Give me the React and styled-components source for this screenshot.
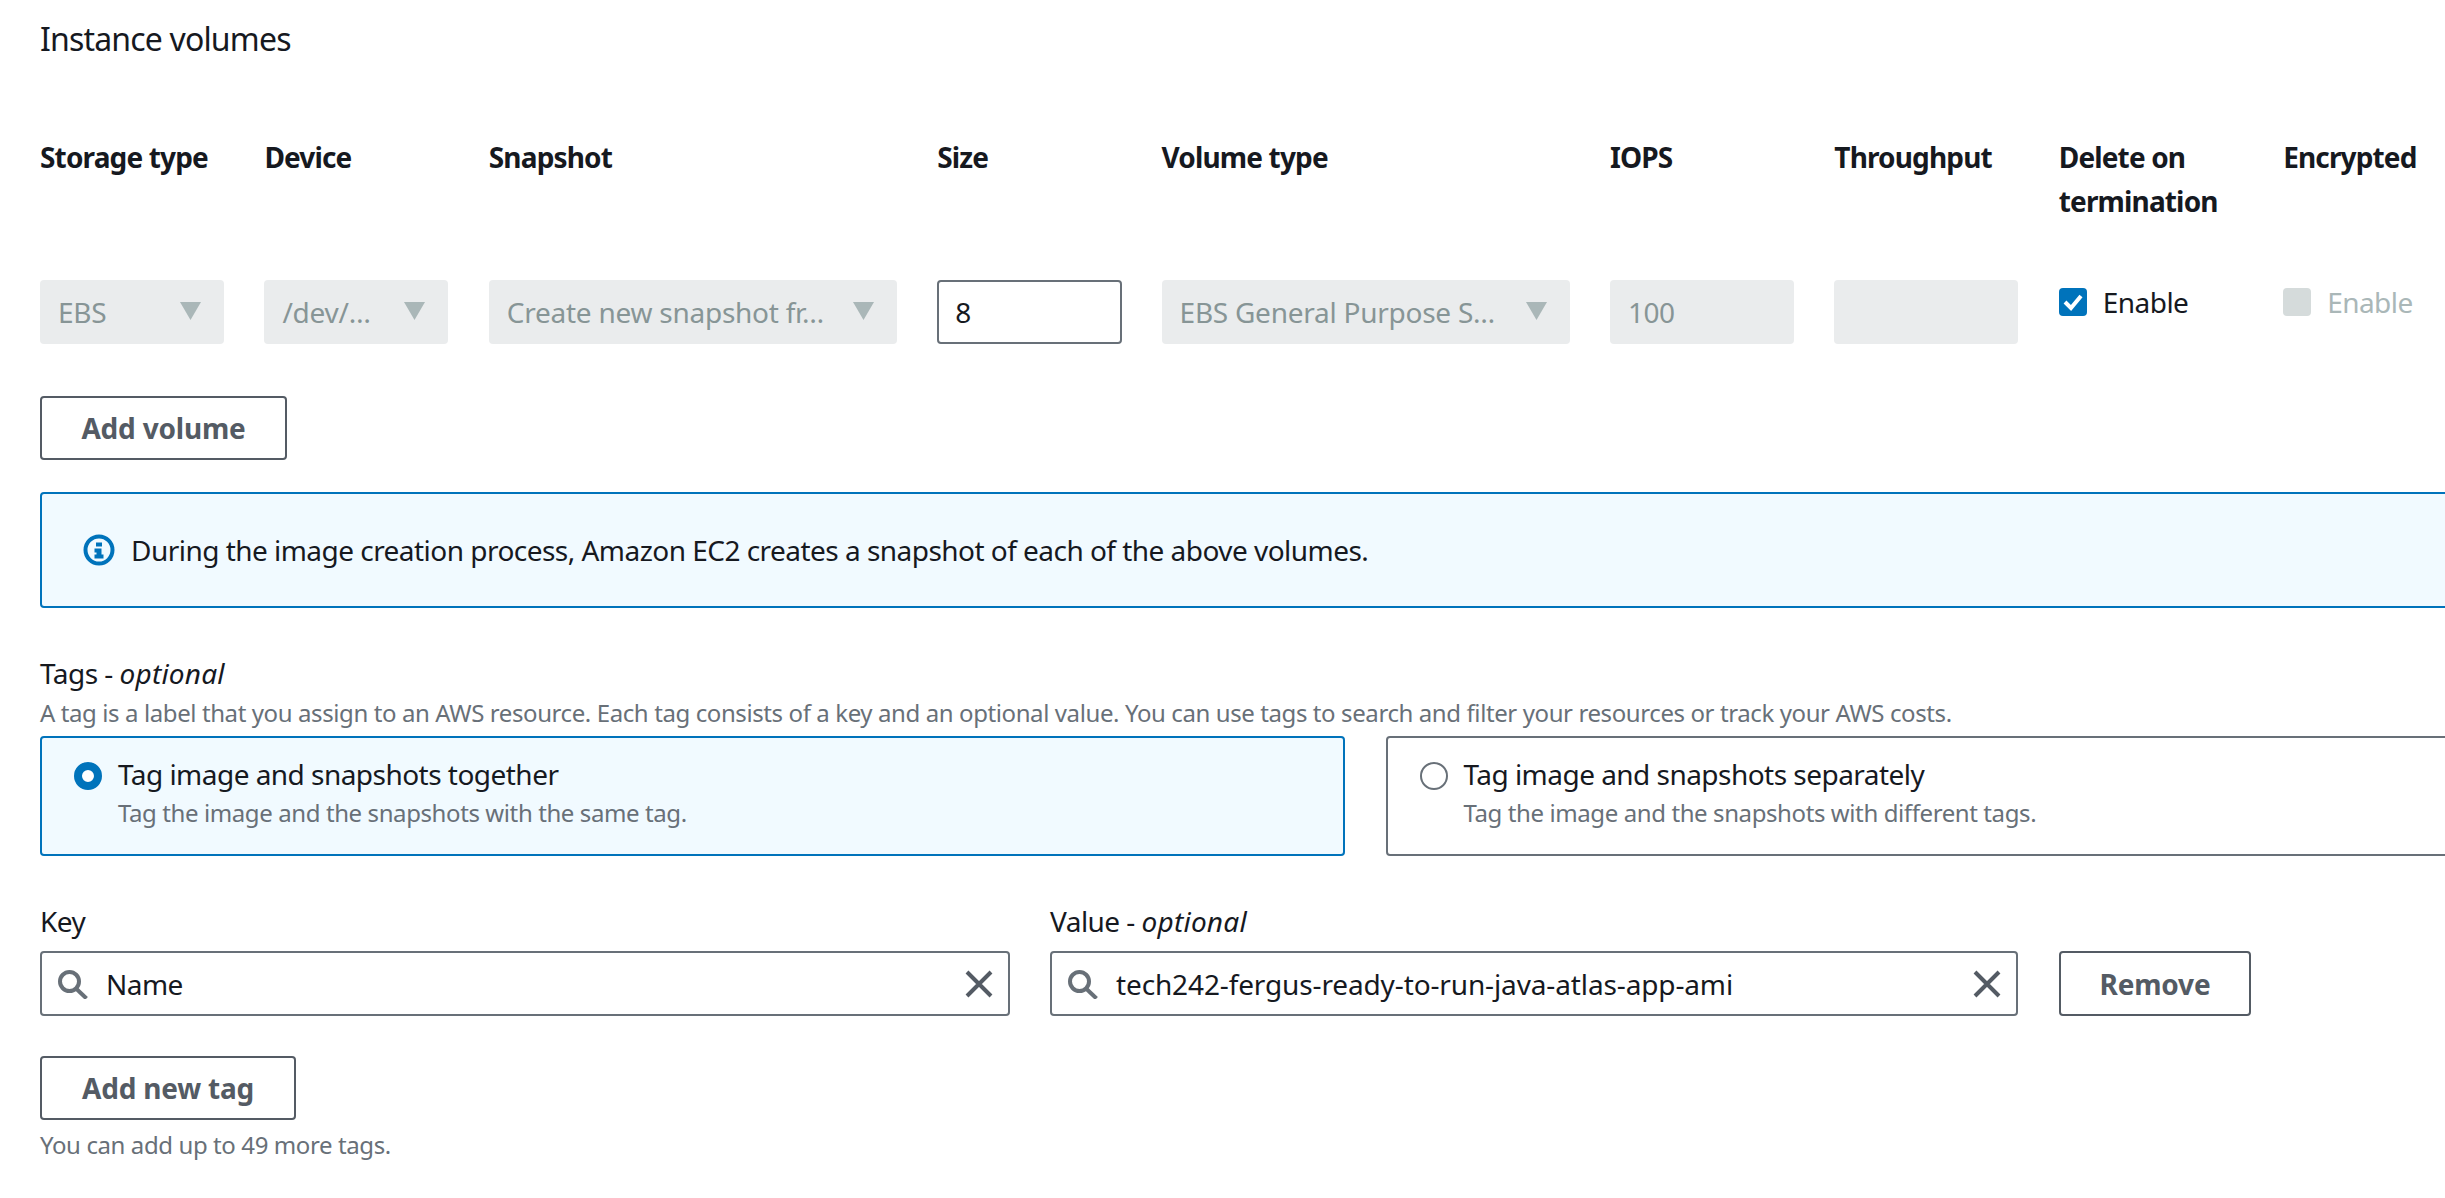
import React from "react";
import styled, { createGlobalStyle } from "styled-components";

const GlobalStyle = createGlobalStyle`
  html, body {
    margin: 0;
    padding: 0;
    background: #fff;
    overflow: hidden;
  }
  * {
    box-sizing: border-box;
  }
`;

const Page = styled.div`
  width: 2445px;
  height: 1198px;
  overflow: hidden;
  padding: 17px 0 0 40px;
  font-family: "Noto Sans", "Open Sans", sans-serif;
  font-size: 28px;
  line-height: 44px;
  color: #16191f;
  letter-spacing: -0.53px;
`;

const Title = styled.div`
  height: 44px;
  margin-bottom: 74px;
  font-size: 32px;
  letter-spacing: -0.83px;
`;

const VolumeGrid = styled.div`
  display: grid;
  width: 2600px;
  grid-template-columns: 184px 184px 408px 184px 408px 184px 184px 184px 184px;
  column-gap: 40.4px;
  row-gap: 57px;
  margin-bottom: 52px;
`;

const HeadCell = styled.div`
  font-weight: 700;
  min-height: 88px;
  letter-spacing: -0.85px;
`;

const SelectBox = styled.div`
  display: flex;
  align-items: center;
  justify-content: space-between;
  height: 64px;
  padding: 0 23px 0 18px;
  background: #eaeced;
  border-radius: 4px;
  color: #879596;
  letter-spacing: -0.25px;
`;

const Caret = styled.svg`
  flex: none;
  width: 21px;
  height: 18px;
  margin-top: -2px;
  fill: #aab7b8;
`;

const TextBox = styled.div`
  height: 64px;
  padding: ${p => (p.$disabled ? "10px 18px" : "8px 16px")};
  margin-right: ${p => (p.$disabled ? "0" : "-1px")};
  background: ${p => (p.$disabled ? "#eaeced" : "#fff")};
  color: ${p => (p.$disabled ? "#879596" : "#16191f")};
  border: ${p => (p.$disabled ? "none" : "2px solid #687078")};
  border-radius: 4px;
`;

const CheckRow = styled.div`
  display: flex;
  align-items: center;
  gap: 16px;
  height: 44px;
  color: ${p => (p.$disabled ? "#aab7b8" : "#16191f")};
`;

const CheckMark = styled.span`
  display: flex;
  align-items: center;
  justify-content: center;
  width: 28px;
  height: 28px;
  border-radius: 4px;
  background: ${p => (p.$disabled ? "#d5dbdb" : "#0073bb")};
`;

const Button = styled.div`
  display: inline-flex;
  align-items: center;
  justify-content: center;
  width: ${p => p.$width}px;
  height: ${p => p.$height || 64}px;
  border: 2px solid #545b64;
  border-radius: 4px;
  background: #fff;
  color: #545b64;
  font-weight: 700;
  letter-spacing: -0.2px;
`;

const ButtonRow = styled.div`
  height: 64px;
  margin-bottom: 32px;
`;

const Alert = styled.div`
  display: flex;
  align-items: center;
  gap: 16px;
  width: 2600px;
  height: 116px;
  padding: 0 41px;
  background: #f1faff;
  border: 2px solid #0073bb;
  border-radius: 4px;
  margin-bottom: 45px;
`;

const TagsLabel = styled.div`
  line-height: 40px;
  margin-bottom: 2px;
`;

const Optional = styled.i`
  font-style: italic;
  letter-spacing: 0.2px;
`;

const Description = styled.div`
  font-size: 24px;
  line-height: 36px;
  color: #687078;
  letter-spacing: -0.4px;
  margin-bottom: ${p => p.$gap || 0}px;
`;

const Tiles = styled.div`
  display: grid;
  grid-template-columns: 1305px 1305px;
  column-gap: 40.5px;
  margin-bottom: 45px;
`;

const Tile = styled.div`
  display: flex;
  gap: 16px;
  height: 120px;
  padding: 15px 32px 0;
  background: ${p => (p.$active ? "#f1faff" : "#fff")};
  border: 2px solid ${p => (p.$active ? "#0073bb" : "#687078")};
  border-radius: 4px;
`;

const Radio = styled.span`
  flex: none;
  width: 28px;
  height: 28px;
  margin-top: 9px;
  border-radius: 50%;
  background: #fff;
  border: ${p => (p.$active ? "8px solid #0073bb" : "2px solid #687078")};
`;

const TileTitle = styled.div`
  line-height: 42px;
`;

const TagRow = styled.div`
  display: flex;
  margin-bottom: 40px;
`;

const TagField = styled.div`
  width: ${p => p.$width}px;
  margin-right: ${p => p.$gap}px;
`;

const FieldLabel = styled.div`
  height: 44px;
  line-height: 41px;
  margin-bottom: 6px;
`;

const SearchBox = styled.div`
  display: flex;
  align-items: center;
  height: 65px;
  padding: 0 16px;
  border: 2px solid #687078;
  border-radius: 4px;
  background: #fff;
`;

const SearchValue = styled.span`
  flex: 1;
  margin-left: 18px;
  white-space: nowrap;
  letter-spacing: ${p => (p.$loose ? "-0.13px" : "inherit")};
`;

const RemoveSlot = styled.div`
  padding-top: 50px;
`;

const Note = styled(Description)`
  margin-top: 7px;
`;

const IconSvg = styled.svg`
  flex: none;
  width: 30px;
  height: 30px;
  fill: none;
  stroke: #687078;
  stroke-width: 4;
`;

const ClearSvg = styled(IconSvg)`
  margin-right: -2px;
  stroke: #545b64;
`;

const InfoSvg = styled.svg`
  flex: none;
  width: 32px;
  height: 32px;
`;

const DownCaret = () => (
  <Caret viewBox="0 0 21 18">
    <path d="M0 0h21L10.5 18z" />
  </Caret>
);

const SearchIcon = () => (
  <IconSvg viewBox="0 0 30 30">
    <circle cx="11.5" cy="12.5" r="9.5" />
    <path d="M18 19.5l10.5 10" />
  </IconSvg>
);

const ClearIcon = () => (
  <ClearSvg viewBox="0 0 30 30">
    <path d="M3 3l24 24M27 3L3 27" />
  </ClearSvg>
);

const InfoIcon = () => (
  <InfoSvg viewBox="0 0 32 32">
    <circle cx="16" cy="16" r="13.5" fill="none" stroke="#0073bb" strokeWidth="4" />
    <path d="M13 8.5h6v4h-6zM11.5 14.5h7v6h2v4h-9v-4h2v-2h-2z" fill="#0073bb" />
  </InfoSvg>
);

const Tick = () => (
  <svg width="20" height="18" viewBox="0 0 20 18">
    <path d="M2 9l6 6L18 3" fill="none" stroke="#fff" strokeWidth="4" />
  </svg>
);

const headers = [
  "Storage type",
  "Device",
  "Snapshot",
  "Size",
  "Volume type",
  "IOPS",
  "Throughput",
  "Delete on termination",
  "Encrypted"
];

const Select = ({ value }) => (
  <SelectBox>
    <span>{value}</span>
    <DownCaret />
  </SelectBox>
);

const App = () => (
  <Page>
    <GlobalStyle />
    <Title>Instance volumes</Title>

    <VolumeGrid>
      {headers.map(name => (
        <HeadCell key={name}>{name}</HeadCell>
      ))}
      <Select value="EBS" />
      <Select value="/dev/…" />
      <Select value="Create new snapshot fr…" />
      <TextBox>8</TextBox>
      <Select value="EBS General Purpose S…" />
      <TextBox $disabled>100</TextBox>
      <TextBox $disabled />
      <CheckRow>
        <CheckMark>
          <Tick />
        </CheckMark>
        Enable
      </CheckRow>
      <CheckRow $disabled>
        <CheckMark $disabled />
        Enable
      </CheckRow>
    </VolumeGrid>

    <ButtonRow>
      <Button $width={247}>Add volume</Button>
    </ButtonRow>

    <Alert>
      <InfoIcon />
      During the image creation process, Amazon EC2 creates a snapshot of each of the above volumes.
    </Alert>

    <TagsLabel>
      Tags - <Optional>optional</Optional>
    </TagsLabel>
    <Description $gap={5}>
      A tag is a label that you assign to an AWS resource. Each tag consists of a key and an optional value. You can use tags to search and filter your resources or track your AWS costs.
    </Description>

    <Tiles>
      <Tile $active>
        <Radio $active />
        <div>
          <TileTitle>Tag image and snapshots together</TileTitle>
          <Description>Tag the image and the snapshots with the same tag.</Description>
        </div>
      </Tile>
      <Tile>
        <Radio />
        <div>
          <TileTitle>Tag image and snapshots separately</TileTitle>
          <Description>Tag the image and the snapshots with different tags.</Description>
        </div>
      </Tile>
    </Tiles>

    <TagRow>
      <TagField $width={970} $gap={40}>
        <FieldLabel>Key</FieldLabel>
        <SearchBox>
          <SearchIcon />
          <SearchValue>Name</SearchValue>
          <ClearIcon />
        </SearchBox>
      </TagField>
      <TagField $width={968} $gap={41}>
        <FieldLabel>
          Value - <Optional>optional</Optional>
        </FieldLabel>
        <SearchBox>
          <SearchIcon />
          <SearchValue $loose>tech242-fergus-ready-to-run-java-atlas-app-ami</SearchValue>
          <ClearIcon />
        </SearchBox>
      </TagField>
      <RemoveSlot>
        <Button $width={192} $height={65}>Remove</Button>
      </RemoveSlot>
    </TagRow>

    <Button $width={256}>Add new tag</Button>
    <Note>You can add up to 49 more tags.</Note>
  </Page>
);

export default App;
